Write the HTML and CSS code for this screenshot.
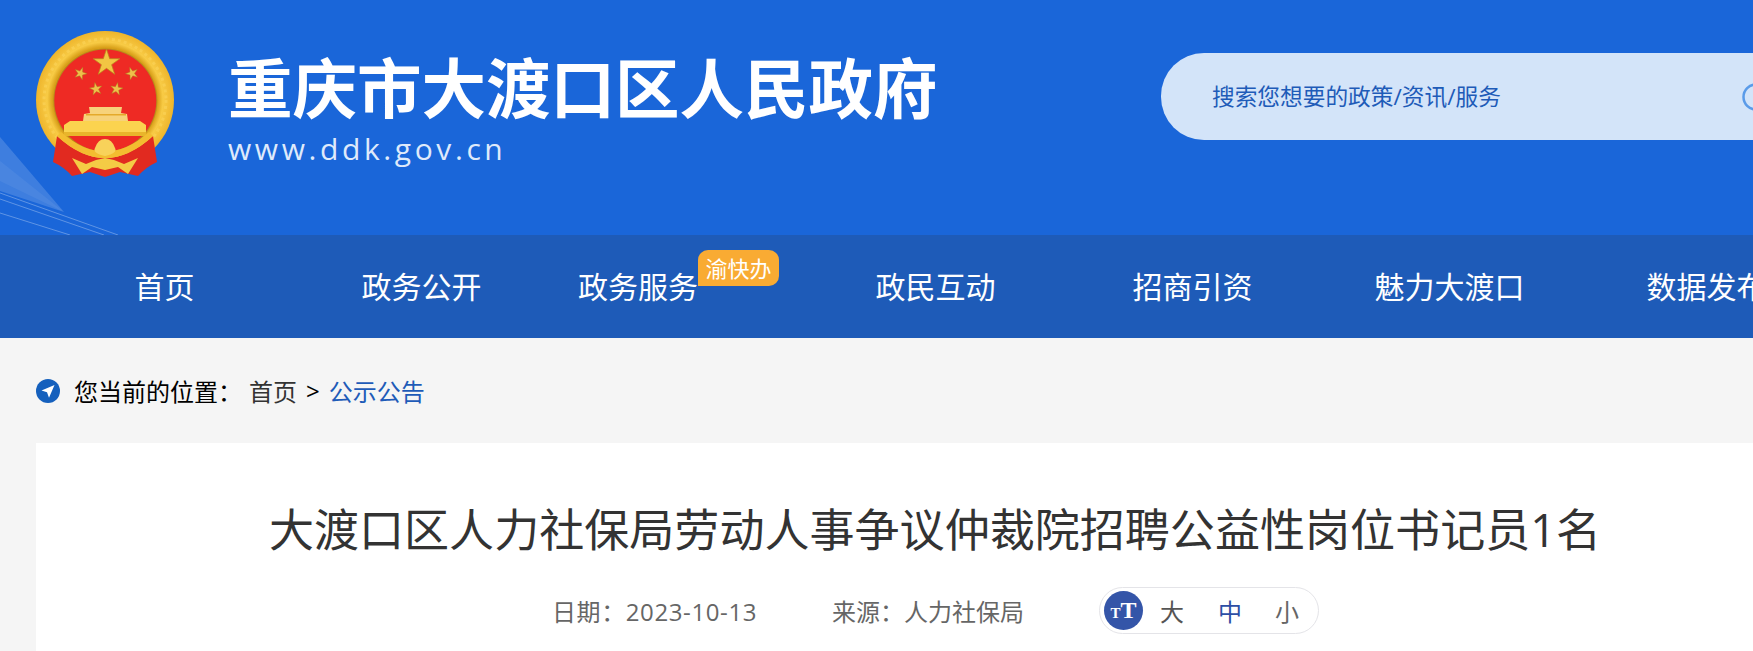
FILE: index.html
```html
<!DOCTYPE html>
<html lang="zh">
<head>
    <meta charset="UTF-8">
    <meta name="viewport" content="width=device-width, initial-scale=1.0">
    <title>大渡口区人力社保局劳动人事争议仲裁院招聘公益性岗位书记员1名</title>
    <link rel="stylesheet" href="styles.css">
</head>
<body>
    <!-- 顶部蓝色区域 -->
    <header class="header">
        <svg class="header-rays" width="130" height="110" viewBox="0 0 130 110">
            <polygon points="0,12 64,87 0,66" fill="#ffffff" opacity="0.16"/>
            <polygon points="0,36 64,87 0,56" fill="#ffffff" opacity="0.06"/>
            <path d="M0 68 L118 110 M0 74 L104 110 M0 88 L70 110" stroke="#ffffff" stroke-opacity="0.3" fill="none"/>
        </svg>
        <div class="brand">
            <svg class="emblem" width="139" height="146" viewBox="0 0 139 146">
                <defs>
                    <polygon id="star" points="0,-10 2.25,-3.09 9.51,-3.09 3.63,1.18 5.88,8.09 0,3.82 -5.88,8.09 -3.63,1.18 -9.51,-3.09 -2.25,-3.09"/>
                    <radialGradient id="ring" cx="50%" cy="50%" r="50%">
                        <stop offset="76%" stop-color="#d9a019"/>
                        <stop offset="84%" stop-color="#f8cb45"/>
                        <stop offset="100%" stop-color="#eeb52c"/>
                    </radialGradient>
                </defs>
                <circle cx="69" cy="69" r="69" fill="url(#ring)"/>
                <circle cx="69" cy="69" r="61" fill="none" stroke="#fbd35a" stroke-width="3" stroke-dasharray="3 3" opacity="0.6"/>
                <circle cx="69.3" cy="69.5" r="52" fill="#b88a1c"/>
                <circle cx="69.3" cy="69.5" r="51" fill="#ee2a24"/>
                <use href="#star" transform="translate(70.5,32) scale(1.4)" fill="#f2c543" stroke="#b78a1e" stroke-width="0.5"/>
                <use href="#star" transform="translate(44.5,42.5) rotate(20) scale(.66)" fill="#eec04a" stroke="#a87f1d" stroke-width="0.6"/>
                <use href="#star" transform="translate(96,42.5) rotate(-20) scale(.66)" fill="#eec04a" stroke="#a87f1d" stroke-width="0.6"/>
                <use href="#star" transform="translate(60,58) rotate(-10) scale(.66)" fill="#eec04a" stroke="#a87f1d" stroke-width="0.6"/>
                <use href="#star" transform="translate(80.5,58) rotate(10) scale(.66)" fill="#eec04a" stroke="#a87f1d" stroke-width="0.6"/>
                <!-- 天安门 -->
                <polygon points="53,76 86,76 85,82 91,83 92,90 47,90 48,83 54,82" fill="#f7d27a"/>
                <rect x="50" y="83" width="40" height="1.5" fill="#e5a92a"/>
                <polygon points="34,90 104,90 110,94 110,101 28,101 28,94" fill="#fbd34f"/>
                <rect x="28" y="101" width="82" height="4" fill="#e9b52b"/>
                <!-- 下方绶带 -->
                <path d="M21 105 Q69 149 117 105 L121 131 Q110 136 102 145 L84 141 L69 146 L54 141 L36 145 Q28 136 17 131Z" fill="#e12a20"/>
                <path d="M21 105 Q69 149 117 105 L113 101 Q69 140 25 101Z" fill="#f3bd30"/>
                <path d="M59 117 Q62 108 69 108 Q76 108 79 117 Q82 122 69 125 Q56 122 59 117Z" fill="#f8d25a"/>
                <polygon points="36,127 50,133 60,129 69,127 78,129 88,133 102,127 92,143 82,136 69,139 56,136 46,143" fill="#f4cb45"/>
            </svg>
            <div class="brand-text">
                <h1 class="site-name">重庆市大渡口区人民政府</h1>
                <div class="site-url">www.ddk.gov.cn</div>
            </div>
        </div>
        <div class="search">
            <span class="search-text">搜索您想要的政策/资讯/服务</span>
            <svg class="search-icon" width="28" height="30" viewBox="0 0 28 30">
                <circle cx="14" cy="15" r="12.5" fill="none" stroke="#5a9be9" stroke-width="2.5"/>
            </svg>
        </div>
    </header>

    <!-- 导航 -->
    <nav class="nav">
        <div class="nav-inner">
            <a class="nav-item">首页</a>
            <a class="nav-item">政务公开</a>
            <a class="nav-item">政务服务<span class="nav-badge">渝快办</span></a>
            <a class="nav-item">政民互动</a>
            <a class="nav-item">招商引资</a>
            <a class="nav-item">魅力大渡口</a>
            <a class="nav-item">数据发布</a>
        </div>
    </nav>

    <main class="main">
        <div class="crumb">
            <svg class="crumb-icon" width="24" height="24" viewBox="0 0 24 24">
                <circle cx="12" cy="12" r="12" fill="#1560bd"/>
                <polygon points="18.5,6 5.5,11.5 11,13.2 13,18.8" fill="#ffffff"/>
            </svg>
            <span class="crumb-label">您当前的位置：</span>
            <a class="crumb-home">首页</a>
            <span class="crumb-sep">&gt;</span>
            <a class="crumb-current">公示公告</a>
        </div>

        <article class="card">
            <h2 class="article-title">大渡口区人力社保局劳动人事争议仲裁院招聘公益性岗位书记员1名</h2>
            <div class="meta">
                <span class="meta-date">日期：2023-10-13</span>
                <span class="meta-source">来源：人力社保局</span>
                <div class="font-size">
                    <span class="font-icon"><span class="font-icon-small">T</span>T</span>
                    <span class="font-big">大</span>
                    <span class="font-mid">中</span>
                    <span class="font-small">小</span>
                </div>
            </div>
        </article>
    </main>
</body>
</html>
```

FILE: styles.css
```css
html, body {
    height: 651px;
    overflow: hidden;
}
body {
    margin: 0;
    width: 1753px;
    background-color: #f5f5f5;
    font-family: "Open Sans", "Noto Sans CJK SC", sans-serif;
}
a {
    text-decoration: none;
}

/* 顶部 */
.header {
    position: relative;
    display: flex;
    align-items: flex-start;
    height: 235px;
    width: 1800px;
    background-color: #1a66d9;
}
.header-rays {
    position: absolute;
    left: 0;
    bottom: 0;
}
.brand {
    position: relative;
    display: flex;
    width: 1125px;
    margin-left: 36px;
    padding-top: 31px;
    flex-shrink: 0;
}
.emblem {
    flex-shrink: 0;
}
.brand-text {
    margin-left: 53px;
}
.site-name {
    margin: 0;
    margin-top: 19px;
    font-size: 64.5px;
    line-height: 76px;
    font-weight: 700;
    color: #ffffff;
    white-space: nowrap;
}
.site-url {
    margin-top: 4px;
    font-size: 30px;
    line-height: 38px;
    letter-spacing: 3.6px;
    color: #dfeafb;
}
.search {
    display: flex;
    align-items: center;
    justify-content: space-between;
    box-sizing: border-box;
    width: 640px;
    height: 87px;
    margin-top: 53px;
    padding: 0 31px 0 51px;
    background-color: #d3e4f9;
    border-radius: 43px 0 0 43px;
    flex-shrink: 0;
}
.search-text {
    font-size: 22.7px;
    line-height: 84px;
    color: #1e5bb8;
}

/* 导航 */
.nav {
    height: 103px;
    background-color: #1e5bb8;
}
.nav-inner {
    display: flex;
    width: 1798px;
    margin-left: 36px;
}
.nav-item {
    display: flex;
    justify-content: center;
    width: 257px;
    flex-shrink: 0;
    font-size: 30px;
    line-height: 103px;
    color: #ffffff;
}
.nav-badge {
    align-self: flex-start;
    height: 36px;
    margin-top: 15px;
    padding: 0 7.5px;
    font-size: 22px;
    line-height: 36px;
    color: #ffffff;
    background-color: #f9ab33;
    border-radius: 10px 10px 10px 0;
}

/* 位置 */
.main {
    width: 1798px;
    margin-left: 36px;
}
.crumb {
    display: flex;
    align-items: center;
    height: 105px;
    font-size: 24px;
}
.crumb-label {
    margin-left: 14px;
    color: #000000;
}
.crumb-home {
    margin-left: 7px;
    color: #333333;
}
.crumb-sep {
    margin: 0 9px 0 9px;
    color: #000000;
}
.crumb-current {
    color: #1e5bb8;
}

/* 正文 */
.card {
    height: 208px;
    background-color: #ffffff;
    text-align: center;
}
.article-title {
    margin: 0;
    padding-top: 54px;
    font-size: 45.05px;
    line-height: 66px;
    font-weight: 400;
    color: #333333;
}
.meta {
    display: flex;
    align-items: center;
    margin-top: 24px;
    margin-left: 516px;
    font-size: 24px;
    color: #666666;
}
.meta-date {
    letter-spacing: 0.6px;
}
.meta-source {
    margin-left: 75px;
}
.font-size {
    display: flex;
    align-items: center;
    box-sizing: border-box;
    width: 220px;
    height: 47px;
    margin-left: 75px;
    padding-left: 4px;
    border: 1px solid #e4e4e8;
    border-radius: 24px;
}
.font-icon {
    width: 39px;
    height: 39px;
    border-radius: 50%;
    background-color: #3455a8;
    font-family: "Liberation Serif", serif;
    font-weight: 700;
    font-size: 24px;
    line-height: 39px;
    color: #ffffff;
    flex-shrink: 0;
}
.font-icon-small {
    font-size: 15px;
}
.font-big {
    margin-left: 17px;
    color: #555555;
}
.font-mid {
    margin-left: 34px;
    color: #2d4ea5;
}
.font-small {
    margin-left: 33px;
    color: #666666;
}
```
